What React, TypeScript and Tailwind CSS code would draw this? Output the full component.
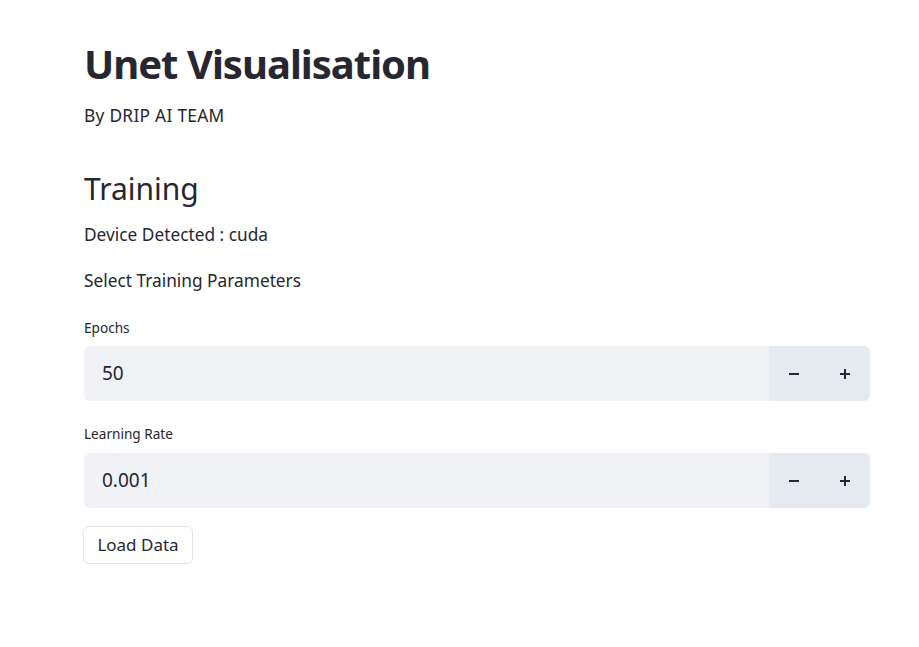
import React from "react";

function Minus() {
  return (
    <svg width="10" height="10" viewBox="0 0 10 10">
      <rect x="0" y="4" width="10" height="2" fill="#262730" />
    </svg>
  );
}
function Plus() {
  return (
    <svg width="10" height="10" viewBox="0 0 10 10">
      <rect x="0" y="4" width="10" height="2" fill="#262730" />
      <rect x="4" y="0" width="2" height="10" fill="#262730" />
    </svg>
  );
}

function NumberInput({ value }: { value: string }) {
  return (
    <div className="flex h-[55px] w-full rounded-[6px] overflow-hidden bg-[#f0f2f6]">
      <div className="flex-1 flex items-center pl-[18px] text-[19px] text-[#262730]">{value}</div>
      <div className="flex w-[101px] bg-[#e5e9f0]">
        <div className="flex-1 flex items-center justify-center">
          <Minus />
        </div>
        <div className="flex-1 flex items-center justify-center">
          <Plus />
        </div>
      </div>
    </div>
  );
}

export default function App() {
  return (
    <div
      className="w-[919px] h-[647px] bg-white text-[#262730]"
      style={{ fontFamily: '"Noto Sans", "Open Sans", sans-serif' }}
    >
      <div className="ml-[84px] w-[786px] pt-[38px] flex flex-col">
        <div className="h-[52px] leading-[52px] text-[40px] font-bold tracking-[-1px]">Unet Visualisation</div>
        <div className="mt-[14px] h-[24px] leading-[24px] text-[17.3px] tracking-[0.3px]">By DRIP AI TEAM</div>
        <div className="mt-[39px] h-[44px] leading-[44px] text-[30px]">Training</div>
        <div className="mt-[12px] h-[24px] leading-[24px] text-[17.3px]">Device Detected : cuda</div>
        <div className="mt-[22px] h-[24px] leading-[24px] text-[17.3px]">Select Training Parameters</div>
        <div className="mt-[25px] h-[20px] leading-[20px] text-[13.6px]">Epochs</div>
        <div className="mt-[8px]">
          <NumberInput value="50" />
        </div>
        <div className="mt-[23px] h-[20px] leading-[20px] text-[13.6px]">Learning Rate</div>
        <div className="mt-[9px]">
          <NumberInput value="0.001" />
        </div>
        <div className="mt-[18px] -ml-[1px]">
          <button className="h-[38px] w-[110px] rounded-[6px] border border-[#e3e4e8] bg-white text-[17px] text-[#262730]">
            Load Data
          </button>
        </div>
      </div>
    </div>
  );
}
